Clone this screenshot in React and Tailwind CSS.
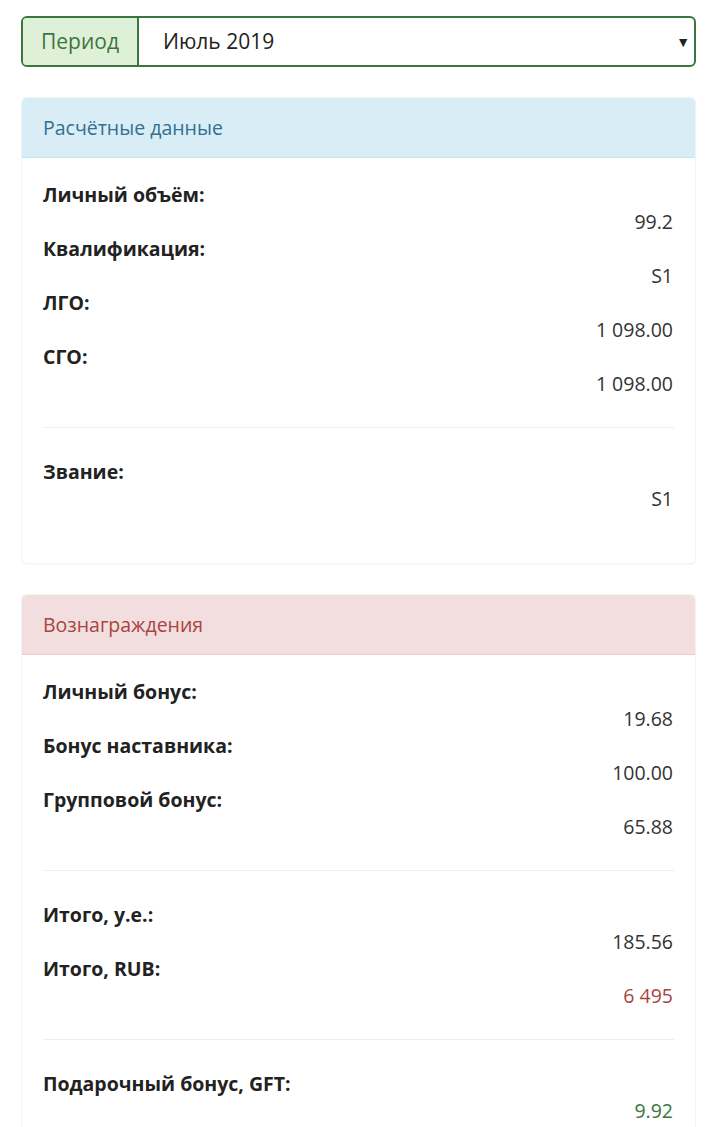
import React from 'react';

const calcData = [
  [
    { label: 'Личный объём:', value: '99.2' },
    { label: 'Квалификация:', value: 'S1' },
    { label: 'ЛГО:', value: '1 098.00' },
    { label: 'СГО:', value: '1 098.00' },
  ],
  [{ label: 'Звание:', value: 'S1' }],
];

const rewards = [
  [
    { label: 'Личный бонус:', value: '19.68' },
    { label: 'Бонус наставника:', value: '100.00' },
    { label: 'Групповой бонус:', value: '65.88' },
  ],
  [
    { label: 'Итого, у.е.:', value: '185.56' },
    { label: 'Итого, RUB:', value: '6 495', tone: 'text-[#a94442]' },
  ],
  [{ label: 'Подарочный бонус, GFT:', value: '9.92', tone: 'text-[#3c763d]' }],
];

const Panel = ({ title, headClass, groups }) => (
  <div className="mt-[30px] rounded-[5px] border border-[#f3f3f3] bg-white shadow-[0_1px_1px_rgba(0,0,0,0.03)]">
    <div className={`rounded-t-[5px] border-b px-[21px] py-[16px] text-[19.5px] leading-[27px] ${headClass}`}>
      {title}
    </div>
    <div className="px-[21px] pt-[23px] pb-[21px]">
      {groups.map((rows, gi) => (
        <div key={gi}>
          {gi > 0 && <hr className="my-[30px] border-t border-[#eeeeee]" />}
          {rows.map((row) => (
            <div key={row.label}>
              <div className="font-bold text-[#222]">{row.label}</div>
              <div className={`pr-px text-right ${row.tone || 'text-[#333]'}`}>{row.value}</div>
            </div>
          ))}
        </div>
      ))}
      <div className="h-[30px]" />
    </div>
  </div>
);

export default function App() {
  return (
    <div className="min-h-screen bg-white px-[21px] pt-[16px] pb-10 text-[19.5px] leading-[27px] font-['Open_Sans',sans-serif]">
      <div className="flex h-[51px] overflow-hidden rounded-[6px] border-2 border-[#3c763d]">
        <div className="flex items-center border-r-2 border-[#3c763d] bg-[#dff0d8] px-[18px] text-[21px] text-[#3c763d]">
          Период
        </div>
        <div className="flex flex-1 items-center justify-between pl-[24px] pr-[4px] text-[21px] text-[#222]">
          <span>Июль 2019</span>
          <span className="text-[14px] text-[#222]">▼</span>
        </div>
      </div>

      <Panel
        title="Расчётные данные"
        headClass="bg-[#d9edf7] border-[#bce8f1] text-[#31708f]"
        groups={calcData}
      />
      <Panel
        title="Вознаграждения"
        headClass="bg-[#f2dede] border-[#ebccd1] text-[#a94442]"
        groups={rewards}
      />
    </div>
  );
}
